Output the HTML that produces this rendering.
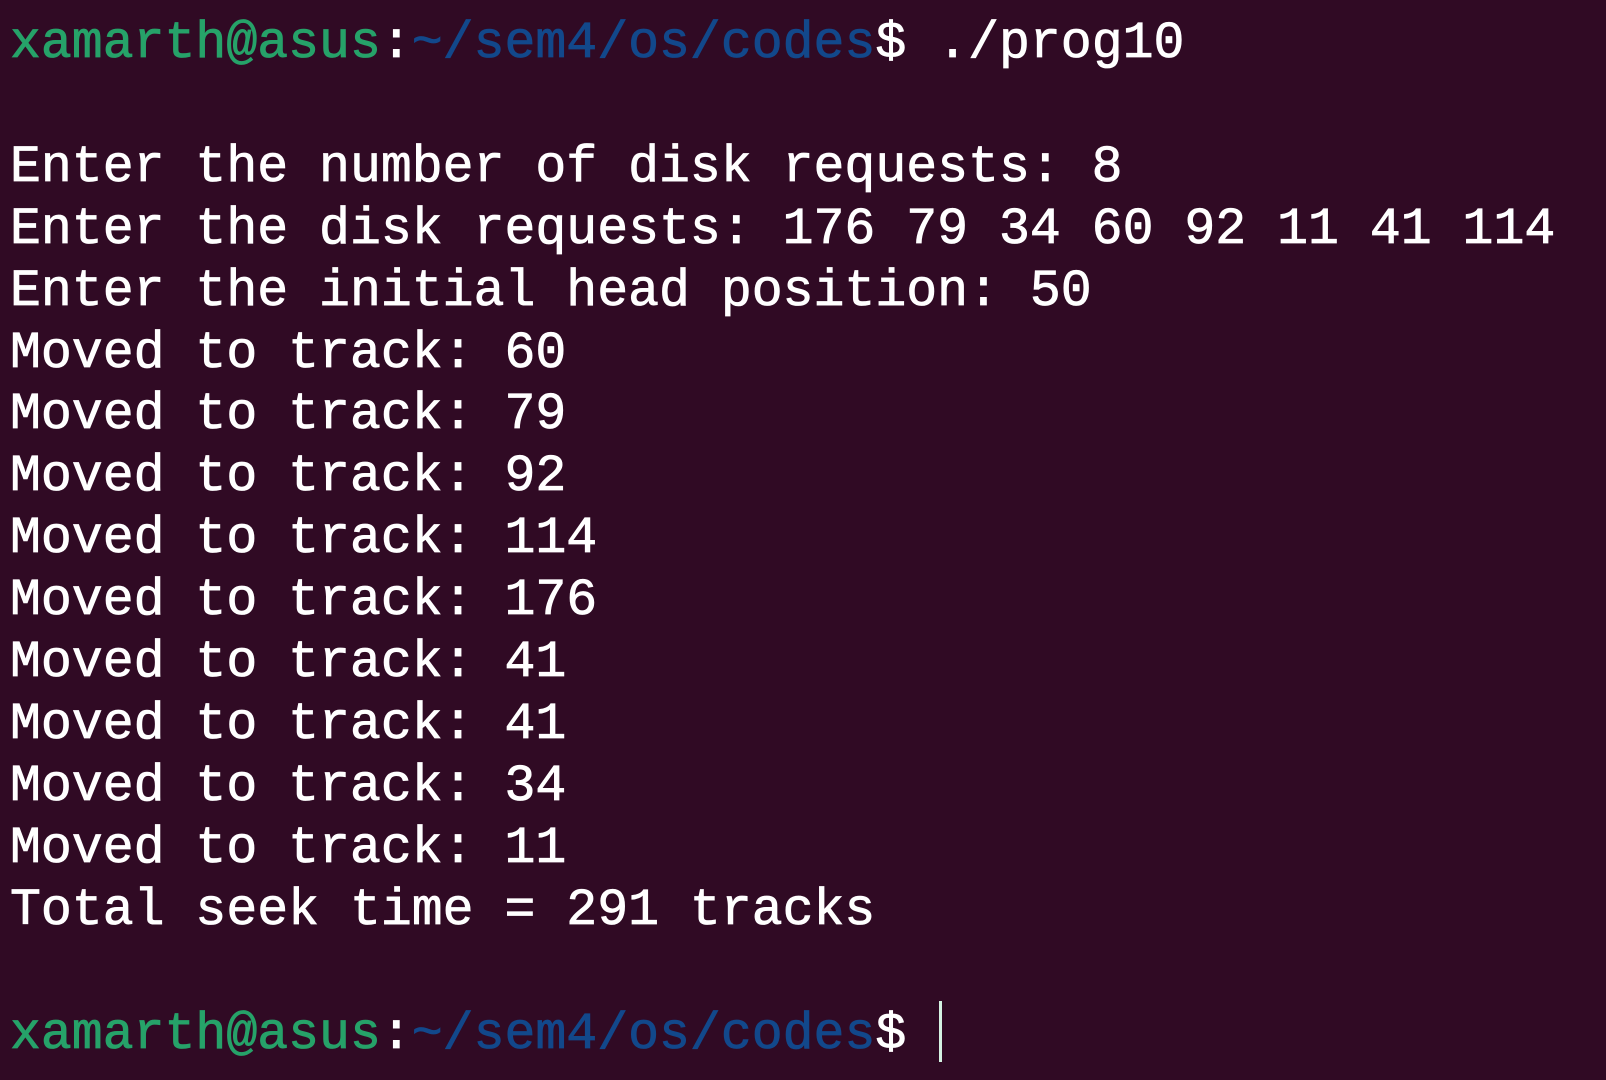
<!DOCTYPE html>
<html><head><meta charset="utf-8"><style>
html,body{margin:0;padding:0;background:#300a24;width:1606px;height:1080px;overflow:hidden}
pre{margin:0;position:absolute;left:10px;top:14px;font-family:"Liberation Mono","DejaVu Sans Mono",monospace;font-size:51.5px;line-height:61.9px;color:#ffffff;-webkit-text-stroke:0.8px currentColor}
.g{color:#26a269}.b{color:#12488b}
.cur{position:absolute;left:939px;top:1001px;width:3px;height:61px;background:#d4f2e2}
</style></head><body>
<pre><span class="g">xamarth@asus</span>:<span class="b">~/sem4/os/codes</span>$ ./prog10

Enter the number of disk requests: 8
Enter the disk requests: 176 79 34 60 92 11 41 114
Enter the initial head position: 50
Moved to track: 60
Moved to track: 79
Moved to track: 92
Moved to track: 114
Moved to track: 176
Moved to track: 41
Moved to track: 41
Moved to track: 34
Moved to track: 11
Total seek time = 291 tracks

<span class="g">xamarth@asus</span>:<span class="b">~/sem4/os/codes</span>$ </pre>
<div class="cur"></div>
</body></html>
